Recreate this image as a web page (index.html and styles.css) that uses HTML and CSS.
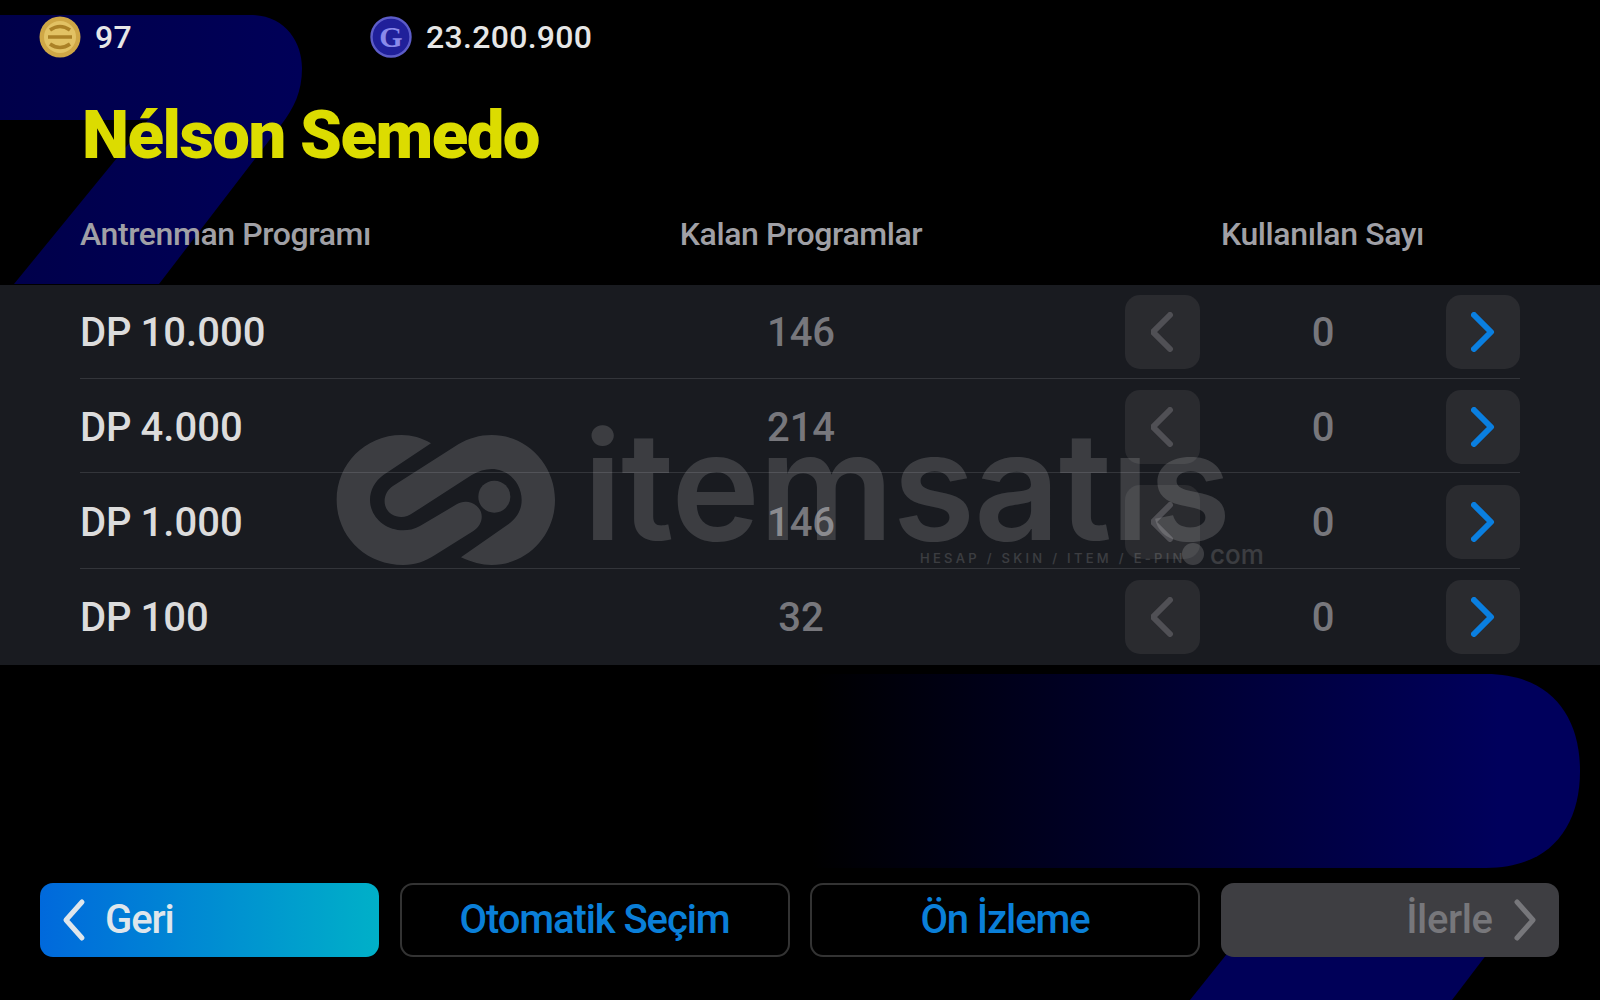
FILE: index.html
```html
<!DOCTYPE html>
<html lang="tr">
<head>
<meta charset="utf-8">
<title>Antrenman Programı</title>
<link rel="stylesheet" href="styles.css">
</head>
<body>
<div class="screen">
  <svg class="backdrop" viewBox="0 0 1600 1000" aria-hidden="true">
    <defs>
      <linearGradient id="fade" x1="811" x2="1500" y1="0" y2="0" gradientUnits="userSpaceOnUse">
        <stop offset="0" stop-color="#00005c" stop-opacity="0"/>
        <stop offset="1" stop-color="#00005c"/>
      </linearGradient>
      <linearGradient id="band" x1="0" x2="300" y1="0" y2="0" gradientUnits="userSpaceOnUse">
        <stop offset="0" stop-color="#00004a"/>
        <stop offset="1" stop-color="#000058"/>
      </linearGradient>
    </defs>
    <path fill="url(#band)" d="M0 15H250C285 15 302 42 302 68C302 92 294 108 281 125L159 284H14L148 120H0Z"/>
    <path fill="url(#fade)" d="M811 674H1486C1550 674 1580 715 1580 771C1580 827 1550 868 1486 868H811Z"/>
    <path fill="#000058" d="M1230 950H1490L1452 1000H1190Z"/>
  </svg>

  <header class="wallet">
    <div class="coin-group coin-group-first">
      <svg class="coin" viewBox="0 0 42 42" aria-hidden="true">
        <circle cx="21" cy="21" r="20.5" fill="#cfa746"/>
        <circle cx="21" cy="21" r="16" fill="#e2c264"/>
        <path d="M9 21h24M11 14q10-7 20 0M11 28q10 7 20 0" fill="none" stroke="#ab8126" stroke-width="3.6"/>
      </svg>
      <span class="coin-value">97</span>
    </div>
    <div class="coin-group">
      <svg class="coin" viewBox="0 0 42 42" aria-hidden="true">
        <circle cx="21" cy="21" r="19.5" fill="#20209a" stroke="#5c5cc8" stroke-width="2.4"/>
        <text class="coin-letter" x="21" y="31" text-anchor="middle">G</text>
      </svg>
      <span class="coin-value">23.200.900</span>
    </div>
  </header>

  <h1 class="player">Nélson Semedo</h1>

  <div class="columns">
    <span class="col-name">Antrenman Programı</span>
    <span class="col-left">Kalan Programlar</span>
    <span class="col-used">Kullanılan Sayı</span>
  </div>

  <section class="panel">
    <div class="row row-first">
      <span class="row-name">DP 10.000</span><span class="row-left">146</span>
      <div class="stepper">
        <button class="step"><svg viewBox="0 0 24 40"><path class="chev-off" d="M19 3L2 20l17 17"/></svg></button>
        <span class="count">0</span>
        <button class="step"><svg viewBox="0 0 24 40"><path class="chev-on" d="M3 3l17 17L3 37"/></svg></button>
      </div>
    </div>
    <div class="row">
      <span class="row-name">DP 4.000</span><span class="row-left">214</span>
      <div class="stepper">
        <button class="step"><svg viewBox="0 0 24 40"><path class="chev-off" d="M19 3L2 20l17 17"/></svg></button>
        <span class="count">0</span>
        <button class="step"><svg viewBox="0 0 24 40"><path class="chev-on" d="M3 3l17 17L3 37"/></svg></button>
      </div>
    </div>
    <div class="row row-tall">
      <span class="row-name">DP 1.000</span><span class="row-left">146</span>
      <div class="stepper">
        <button class="step"><svg viewBox="0 0 24 40"><path class="chev-off" d="M19 3L2 20l17 17"/></svg></button>
        <span class="count">0</span>
        <button class="step"><svg viewBox="0 0 24 40"><path class="chev-on" d="M3 3l17 17L3 37"/></svg></button>
      </div>
    </div>
    <div class="row row-tall">
      <span class="row-name">DP 100</span><span class="row-left">32</span>
      <div class="stepper">
        <button class="step"><svg viewBox="0 0 24 40"><path class="chev-off" d="M19 3L2 20l17 17"/></svg></button>
        <span class="count">0</span>
        <button class="step"><svg viewBox="0 0 24 40"><path class="chev-on" d="M3 3l17 17L3 37"/></svg></button>
      </div>
    </div>
  </section>

  <footer class="actions">
    <button class="action action-back"><svg class="action-chev" viewBox="0 0 24 44"><path d="M20 4L4 22l16 18"/></svg><span class="label">Geri</span></button>
    <button class="action action-outline"><span class="label">Otomatik Seçim</span></button>
    <button class="action action-outline"><span class="label">Ön İzleme</span></button>
    <button class="action action-next"><span class="label">İlerle</span><svg class="action-chev" viewBox="0 0 24 44"><path d="M4 4l16 18L4 40"/></svg></button>
  </footer>

  <div class="watermark" aria-hidden="true">
    <svg class="wm-logo" viewBox="0 0 720 450">
      <path d="M318 55C290 38 260 30 230 30C120 30 35 118 35 225C35 332 120 420 235 420C270 420 300 410 330 390L445 318C475 298 478 262 455 243C435 226 412 228 395 238L285 303C268 313 250 316 235 316C180 316 135 275 135 225C135 195 150 168 175 150Z"/>
      <path d="M408 397C440 412 470 420 500 420C605 420 690 332 690 225C690 118 605 30 500 30C465 30 430 40 400 58L205 182C170 205 172 250 200 268C220 280 245 278 262 265L440 150C460 138 480 132 500 132C550 132 590 175 590 225C590 258 572 282 550 298Z"/>
      <circle cx="508" cy="215" r="48"/>
    </svg>
    <span class="wm-name">itemsatıs</span>
    <span class="wm-dot"></span>
    <span class="wm-tag">HESAP / SKIN / ITEM / E-PIN</span>
    <span class="wm-com">com</span>
  </div>
</div>
</body>
</html>
```
FILE: styles.css
```css
* { box-sizing: border-box; }
html, body { margin: 0; height: 100%; background: #000; }
.screen {
  position: relative;
  width: 1600px;
  height: 1000px;
  overflow: hidden;
  background: #000;
  font-family: "Roboto", "Liberation Sans", sans-serif;
  font-weight: 500;
  color: #ddd;
}
.backdrop { position: absolute; inset: 0; width: 1600px; height: 1000px; }
.wallet, .player, .columns, .panel, .actions { position: relative; }
.wallet { display: flex; align-items: center; height: 58px; padding: 16px 0 0 39px; }
.coin-group { display: flex; align-items: center; gap: 14px; }
.coin-group-first { width: 331px; }
.coin { width: 42px; height: 42px; }
.coin-letter { font-family: "Liberation Serif", serif; font-size: 30px; font-weight: 700; fill: #8a8aea; }
.coin-value { font-size: 32px; letter-spacing: .3px; color: #e6e6e6; }
.player { margin: 42px 0 0 82px; height: 70px; font-size: 67px; line-height: 70px; font-weight: 900; letter-spacing: -1.5px; color: #dcdc00; white-space: nowrap; }
.columns { display: grid; grid-template-columns: 481px 480px 1fr; margin: 44px 80px 0; height: 40px; font-size: 32px; line-height: 40px; letter-spacing: -.4px; color: #a0a0a6; }
.col-left { text-align: center; }
.col-used { text-align: center; padding-left: 84px; }
.panel { margin-top: 31px; height: 380px; background: #191b20; padding: 0 80px; }
.row { display: grid; grid-template-columns: 481px 480px 1fr; align-items: center; height: 94px; padding-top: 3px; border-bottom: 1px solid #33353a; }
.row-first { padding-top: 1px; }
.row-tall { height: 96px; }
.row:last-child { padding-top: 0; border-bottom: 0; }
.row-name { font-size: 40px; word-spacing: -1px; color: #dcdcdc; }
.row-left { text-align: center; font-size: 40px; color: #77777c; }
.stepper { display: grid; grid-template-columns: 75px 1fr 74px; align-items: center; margin-left: 84px; }
.step { height: 74px; border: 0; border-radius: 15px; background: #2a2b2f; padding: 0; display: flex; align-items: center; justify-content: center; }
.step svg { width: 24px; height: 40px; }
.chev-off, .chev-on { fill: none; stroke-width: 6; stroke-linecap: round; stroke-linejoin: round; }
.chev-off { stroke: #505055; }
.chev-on { stroke: #0a7fe0; }
.count { text-align: center; font-size: 40px; color: #77777c; }
.actions { display: grid; grid-template-columns: 339px 390px 390px 338px; column-gap: 20.5px; margin: 218px 0 0 40px; height: 74px; }
.action { display: flex; align-items: center; justify-content: center; padding: 0 22px; border-radius: 13px; border: 2px solid #333; background: #000; font-family: inherit; font-weight: 500; font-size: 40px; letter-spacing: -1.1px; }
.label { line-height: 1; }
.action-back { justify-content: flex-start; gap: 19px; border: 0; background: linear-gradient(90deg, #0069dc, #00b0c8); color: #dfe6ec; }
.action-outline { color: #0a7fd8; }
.action-next { justify-content: flex-end; gap: 20px; border: 0; background: #3e3e42; color: #77777b; letter-spacing: -.4px; }
.action-chev { width: 24px; height: 44px; fill: none; stroke: currentColor; stroke-width: 5; stroke-linecap: round; stroke-linejoin: round; }
.watermark { position: absolute; left: 325px; top: 425px; width: 960px; height: 150px; color: #fff; opacity: .15; pointer-events: none; }
.wm-logo { position: absolute; left: 0; top: 0; width: 240px; height: 150px; fill: #fff; }
.wm-name { position: absolute; left: 258px; top: -29px; font-family: "Inter", sans-serif; font-size: 150px; line-height: 180px; font-weight: 600; letter-spacing: -1.2px; }
.wm-dot { position: absolute; left: 857px; top: 118px; width: 22px; height: 22px; border-radius: 50%; background: #fff; }
.wm-tag { position: absolute; left: 595px; top: 125px; font-family: "Inter", sans-serif; font-size: 13px; line-height: 16px; letter-spacing: 3.3px; font-weight: 500; }
.wm-com { position: absolute; left: 885px; top: 117px; font-family: "Inter", sans-serif; font-size: 26px; line-height: 26px; font-weight: 500; }
```
